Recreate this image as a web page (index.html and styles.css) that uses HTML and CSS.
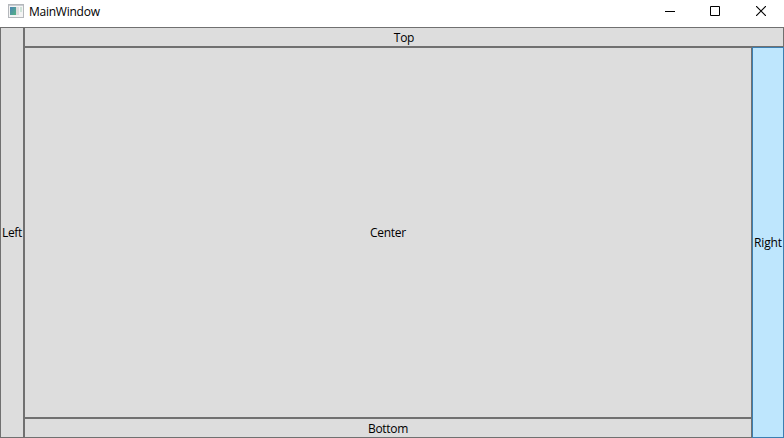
FILE: index.html
```html
<!DOCTYPE html>
<html lang="en">
<head>
<meta charset="utf-8">
<title>MainWindow</title>
<link rel="stylesheet" href="styles.css">
</head>
<body>
<div class="window">
  <header class="titlebar">
    <svg class="app-icon" width="16" height="14" viewBox="0 0 16 14" shape-rendering="crispEdges">
      <defs>
        <linearGradient id="pane" x1="0" y1="0" x2="1" y2="1">
          <stop offset="0" stop-color="#4b83b5"/>
          <stop offset="1" stop-color="#55b383"/>
        </linearGradient>
      </defs>
      <rect x="0.5" y="0.5" width="15" height="13" fill="#f4f4f4" stroke="#b5b8bc"/>
      <rect x="1" y="1" width="14" height="1" fill="#c9cdd2"/>
      <rect x="2" y="3" width="6" height="8" fill="url(#pane)"/>
      <rect x="8" y="3" width="3" height="8" fill="#dedede"/>
      <rect x="12" y="3" width="2" height="5" fill="#cfe3d8"/>
    </svg>
    <span class="title">MainWindow</span>
    <div class="controls">
      <svg width="10" height="10" viewBox="0 0 10 10"><path d="M0 5.5H10"/></svg>
      <svg width="10" height="10" viewBox="0 0 10 10"><path d="M.5 .5H9.5V9.5H.5Z"/></svg>
      <svg class="close" width="10" height="10" viewBox="0 0 10 10"><path d="M0 0L10 10M10 0L0 10"/></svg>
    </div>
  </header>
  <main class="dock">
    <button class="panel left"><span>Left</span></button>
    <button class="panel top"><span>Top</span></button>
    <button class="panel center"><span>Center</span></button>
    <button class="panel right"><span>Right</span></button>
    <button class="panel bottom"><span>Bottom</span></button>
  </main>
</div>
</body>
</html>
```
FILE: styles.css
```css
* { box-sizing: border-box; }
body {
  margin: 0;
  overflow: hidden;
  background: #fff;
  color: #000;
  font: 12px/16px "Open Sans", "Noto Sans", sans-serif;
}
.window {
  height: 438px;
  display: flex;
  flex-direction: column;
}
.titlebar {
  height: 27px;
  flex: none;
  display: flex;
  align-items: flex-start;
  padding: 4px 18px 0 8px;
}
.app-icon { display: block; }
.title {
  margin-left: 5px;
  letter-spacing: -0.25px;
}
.controls {
  display: flex;
  gap: 35px;
  margin: 2px 0 0 auto;
}
.controls svg {
  display: block;
  fill: none;
  stroke: #000;
  stroke-width: 1;
}
.controls .close {
  margin-left: 1px;
  stroke-width: 1.15;
}
.dock {
  flex: 1;
  display: grid;
  grid-template: 20px 1fr 20px / 24px 1fr 32px;
  grid-template-areas:
    "left top top"
    "left center right"
    "left bottom right";
}
.panel {
  display: flex;
  align-items: center;
  justify-content: center;
  min-width: 0;
  padding: 2px 0 0;
  border: 1px solid #707070;
  border-radius: 0;
  background: #ddd;
  color: inherit;
  font: inherit;
  letter-spacing: -0.3px;
  white-space: nowrap;
}
.left { grid-area: left; padding-top: 0; }
.top { grid-area: top; }
.center { grid-area: center; padding-top: 1px; }
.bottom { grid-area: bottom; }
.right {
  grid-area: right;
  padding-top: 1px;
  border-color: #3c7fb1;
  background: #bee6fd;
  letter-spacing: -0.1px;
}
```
